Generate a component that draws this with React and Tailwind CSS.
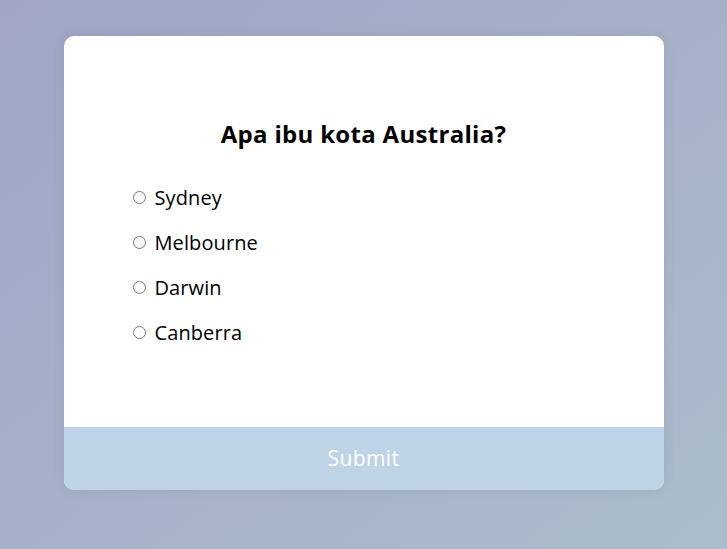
export default function App() {
  const options = ["Sydney", "Melbourne", "Darwin", "Canberra"];

  return (
    <div
      className="min-h-screen w-full flex items-start justify-center pt-[36px] bg-gradient-to-br from-[#a0a5c6] to-[#abbdcc]"
      style={{ fontFamily: '"Open Sans", "Liberation Sans", sans-serif' }}
    >
      <div className="w-[600px] bg-white rounded-[10px] overflow-hidden shadow-[0_0_10px_2px_rgba(100,100,100,0.1)]">
        <div className="px-16 pt-16 pb-[65px]">
          <h2 className="px-4 pt-4 pb-4 text-center text-[24px] leading-[36px] font-bold tracking-[0.3px] text-black">
            Apa ibu kota Australia?
          </h2>
          <ul className="flex flex-col gap-4 py-[15px]">
            {options.map((o) => (
              <li key={o} className="flex items-center h-[29px] text-[20px] tracking-[0.1px] text-black">
                <input type="radio" name="answer" className="ml-[5px] mr-[9px] w-[13px] h-[13px]" />
                <label>{o}</label>
              </li>
            ))}
          </ul>
        </div>
        <button className="block w-full h-[63px] bg-[#bed3e6] text-white text-[21px] tracking-[0.4px]">
          Submit
        </button>
      </div>
    </div>
  );
}
